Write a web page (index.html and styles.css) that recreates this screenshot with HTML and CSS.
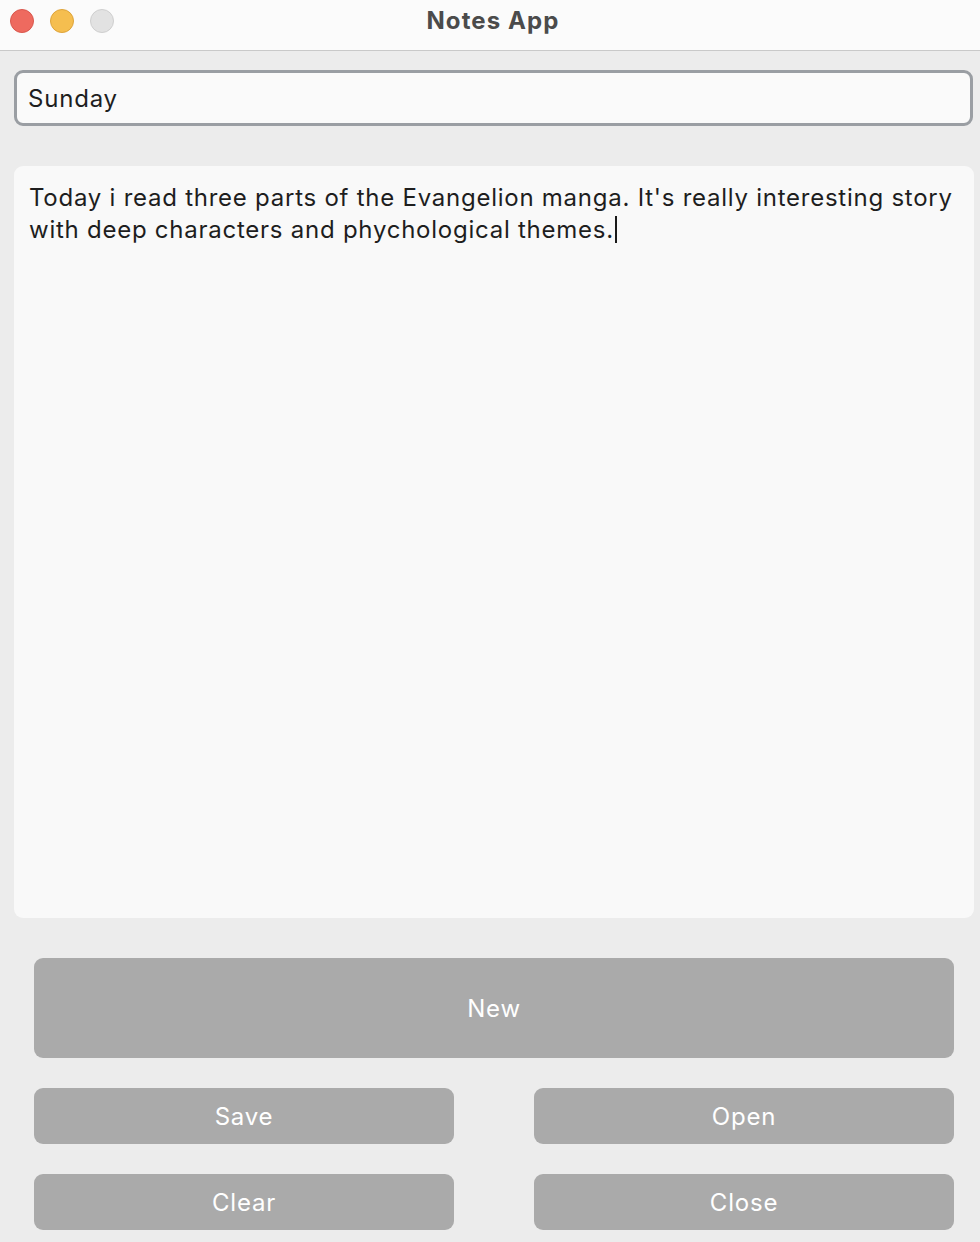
FILE: index.html
```html
<!DOCTYPE html>
<html>
<head>
<meta charset="utf-8">
<title>Notes App</title>
<link rel="stylesheet" href="styles.css">
</head>
<body>
<div class="window">
  <header class="titlebar">
    <div class="lights">
      <span class="light red"></span>
      <span class="light yellow"></span>
      <span class="light gray"></span>
    </div>
    <div class="title">Notes App</div>
  </header>
  <main class="content">
    <div class="field">Sunday</div>
    <div class="editor">Today i read three parts of the Evangelion manga. It's really interesting story with deep characters and phychological themes.<span class="caret"></span></div>
    <div class="buttons">
      <button class="btn btn-new">New</button>
      <div class="grid">
        <button class="btn">Save</button>
        <button class="btn">Open</button>
        <button class="btn">Clear</button>
        <button class="btn">Close</button>
      </div>
    </div>
  </main>
</div>
</body>
</html>
```
FILE: styles.css
```css
* { box-sizing: border-box; }
html, body {
  margin: 0;
  padding: 0;
  background: #ececec;
  font-family: Inter, "Noto Sans", "Liberation Sans", sans-serif;
}
.window {
  width: 980px;
  height: 1242px;
  background: #ececec;
  overflow: hidden;
}
.titlebar {
  height: 51px;
  background: #fbfbfb;
  border-bottom: 1px solid #c9c9c9;
  display: flex;
  align-items: center;
  position: relative;
}
.lights {
  display: flex;
  gap: 16px;
  padding-left: 10px;
  margin-top: -8px;
}
.light {
  width: 24px;
  height: 24px;
  border-radius: 50%;
  display: block;
}
.red { background: #ee6a5f; border: 1px solid #d9574d; }
.yellow { background: #f5be4f; border: 1px solid #dea43a; }
.gray { background: #e2e2e2; border: 1px solid #cfcfcf; }
.title {
  position: absolute;
  left: 0;
  right: 0;
  top: 6px;
  text-align: center;
  font-weight: 700;
  font-size: 24px;
  letter-spacing: 1.1px;
  color: #4b4b4b;
  pointer-events: none;
  padding-left: 6px;
}
.content {
  padding: 19px 6px 0 14px;
  display: flex;
  flex-direction: column;
}
.field {
  height: 56px;
  border: 3px solid #9a9ea3;
  border-radius: 9px;
  background: #fafafa;
  display: flex;
  align-items: center;
  padding-left: 11px;
  font-size: 24px;
  letter-spacing: 0.8px;
  color: #1e1e1e;
  margin-right: 1px;
}
.editor {
  margin-top: 40px;
  height: 752px;
  background: #f9f9f9;
  border-radius: 9px;
  padding: 16px 15px;
  font-size: 24px;
  line-height: 32px;
  letter-spacing: 0.75px;
  color: #1e1e1e;
}
.caret {
  display: inline-block;
  width: 0;
  height: 27px;
  border-left: 2px solid #1a1a1a;
  vertical-align: -5px;
  margin-left: 1px;
}
.buttons {
  padding: 40px 20px 0 20px;
  display: flex;
  flex-direction: column;
  gap: 30px;
}
.btn {
  border: none;
  background: #aaaaaa;
  color: #ffffff;
  border-radius: 9px;
  font-family: Inter, "Noto Sans", "Liberation Sans", sans-serif;
  font-size: 24px;
  letter-spacing: 0.8px;
  height: 56px;
  padding: 0;
  margin: 0;
}
.btn-new {
  height: 100px;
}
.grid {
  display: grid;
  grid-template-columns: 420px 420px;
  column-gap: 80px;
  row-gap: 30px;
}
```
